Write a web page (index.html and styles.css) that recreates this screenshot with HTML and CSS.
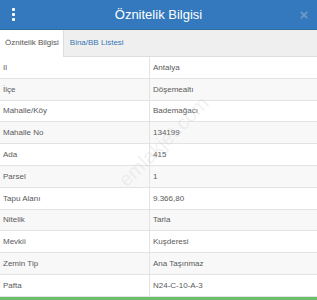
FILE: index.html
```html
<!DOCTYPE html>
<html lang="tr">
<head>
    <meta charset="UTF-8">
    <meta name="viewport" content="width=device-width, initial-scale=1.0">
    <title>Öznitelik Bilgisi</title>
    <link rel="stylesheet" href="styles.css">
</head>
<body>
    <div class="panel">
        <header class="panel-head">
            <span class="dots"><i></i><i></i><i></i></span>
            <h1>Öznitelik Bilgisi</h1>
            <span class="close">&times;</span>
        </header>

        <nav class="tabs">
            <a href="#" class="tab active">Öznitelik Bilgisi</a>
            <a href="#" class="tab">Bina/BB Listesi</a>
        </nav>

        <table class="info">
            <tr><td>Il</td><td>Antalya</td></tr>
            <tr><td>İlçe</td><td>Döşemealtı</td></tr>
            <tr><td>Mahalle/Köy</td><td>Bademağacı</td></tr>
            <tr><td>Mahalle No</td><td>134199</td></tr>
            <tr><td>Ada</td><td>415</td></tr>
            <tr><td>Parsel</td><td>1</td></tr>
            <tr><td>Tapu Alanı</td><td>9.366,80</td></tr>
            <tr><td>Nitelik</td><td>Tarla</td></tr>
            <tr><td>Mevkii</td><td>Kuşderesi</td></tr>
            <tr><td>Zemin Tip</td><td>Ana Taşınmaz</td></tr>
            <tr><td>Pafta</td><td>N24-C-10-A-3</td></tr>
        </table>
        <div class="green-line"></div>

        <!-- filigran -->
        <span class="watermark">emlakjet.com</span>
    </div>
</body>
</html>
```

FILE: styles.css
```css
body {
    margin: 0;
    padding: 0;
    font-family: "Liberation Sans", Arial, sans-serif;
    background: #fff;
    overflow: hidden;
}
.panel {
    position: relative;
    width: 317px;
    height: 300px;
    overflow: hidden;
}
.panel-head {
    height: 30px;
    background: #3479bd;
    display: flex;
    align-items: center;
    color: #fff;
    border-bottom: 1px solid #2e6da4;
    box-sizing: border-box;
}
.panel-head h1 {
    flex: 1;
    margin: 0;
    text-align: center;
    font-size: 13px;
    font-weight: normal;
}
.dots {
    width: 26px;
    display: flex;
    flex-direction: column;
    align-items: center;
    gap: 2px;
}
.dots i {
    width: 3px;
    height: 3px;
    background: #fff;
    border-radius: 1px;
}
.close {
    width: 26px;
    text-align: center;
    font-size: 15px;
    font-weight: bold;
    color: #6f9ac8;
}
.tabs {
    height: 27px;
    background: #efefef;
    display: flex;
    align-items: flex-end;
    border-bottom: 1px solid #ddd;
    box-sizing: border-box;
}
.tab {
    height: 26px;
    line-height: 26px;
    padding: 0 5px 0 6px;
    font-size: 8px;
    color: #3a78b5;
    text-decoration: none;
}
.tab.active {
    background: #fff;
    color: #555;
    border-right: 1px solid #ddd;
    height: 27px;
    margin-bottom: -1px;
    padding: 0 4px 0 5px;
}
.info {
    width: 100%;
    border-collapse: collapse;
    font-size: 8px;
    color: #5a5a5a;
}
.info td {
    height: 20.8px;
    padding: 0 0 0 3px;
    border-bottom: 1px solid #e3e3e3;
}
.info td:first-child {
    width: 146px;
    border-right: 1px solid #e3e3e3;
}
.info tr:nth-child(even) td {
    background: #f8f8f8;
}
.green-line {
    height: 3px;
    background: #6cbf6a;
}
.watermark {
    position: absolute;
    left: 105px;
    top: 130px;
    font-size: 20px;
    color: rgba(200, 200, 200, 0.25);
    transform: rotate(-45deg);
}
```
